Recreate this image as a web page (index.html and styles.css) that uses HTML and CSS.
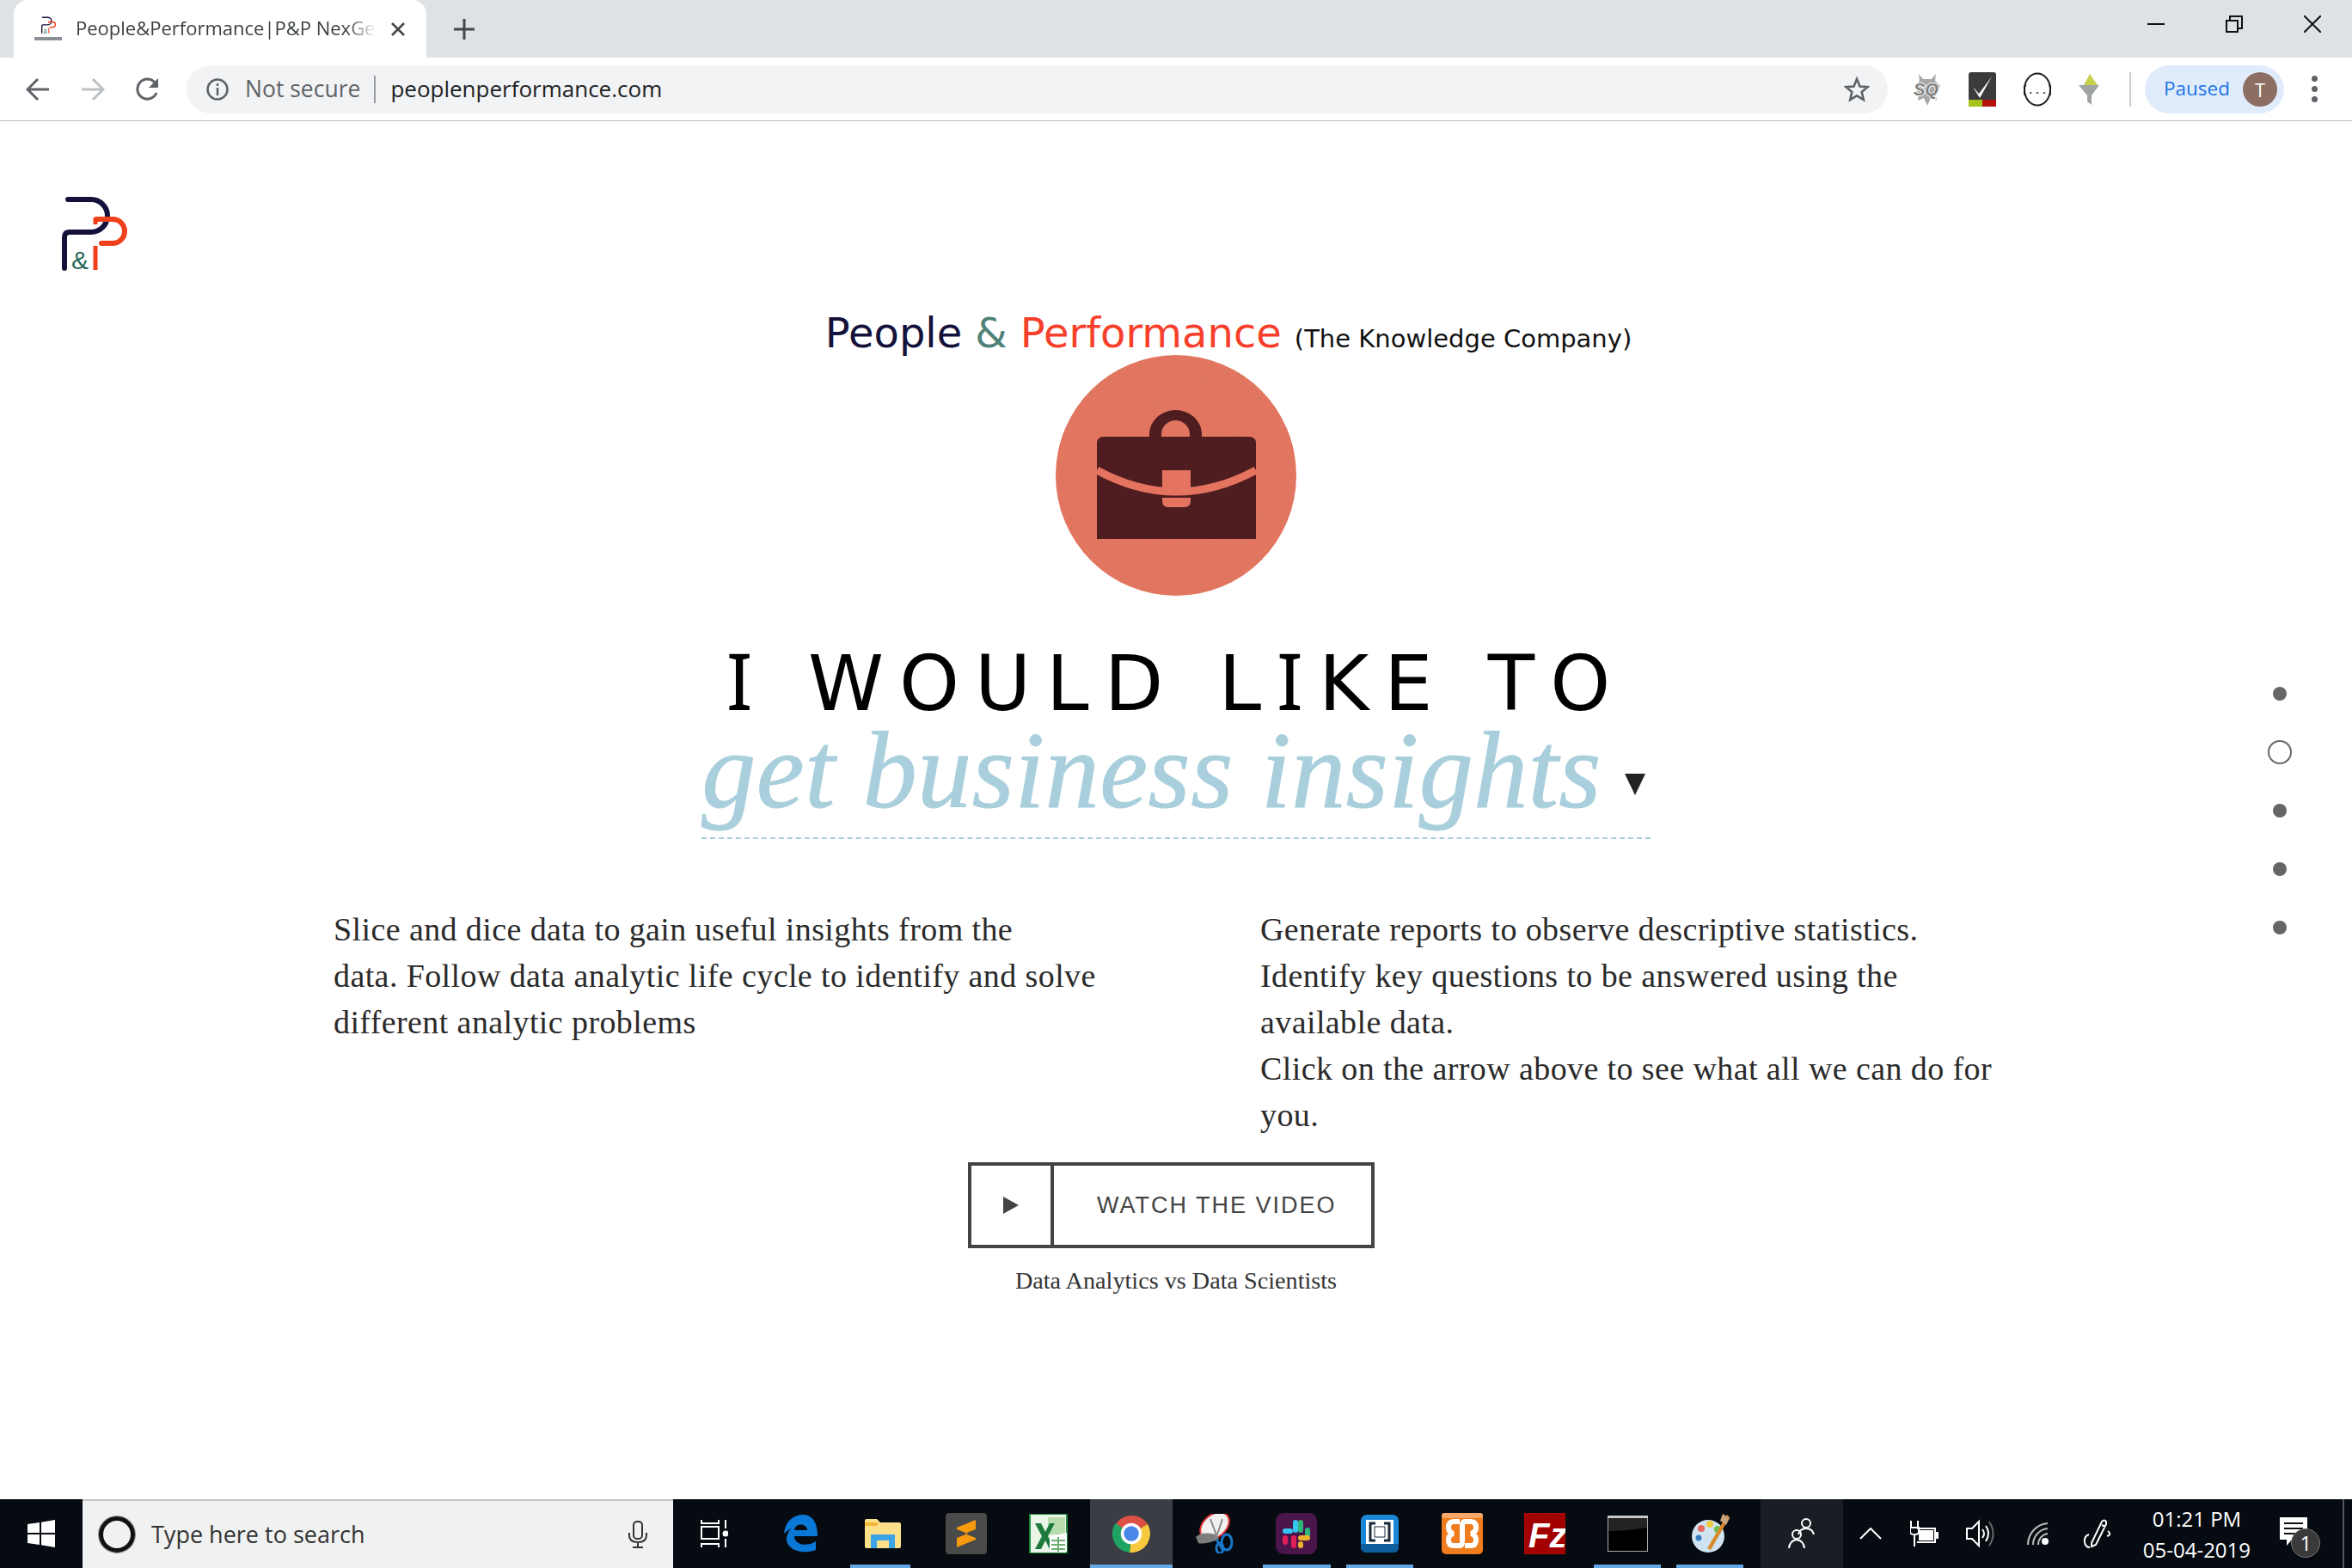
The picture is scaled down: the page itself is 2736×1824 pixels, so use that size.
FILE: index.html
```html
<!DOCTYPE html>
<html lang="en">
<head>
  <meta charset="UTF-8" />
  <title>People&amp;Performance|P&amp;P NexGen</title>
  <link rel="stylesheet" href="styles.css">
</head>
<body>

  <svg class="sprite" width="0" height="0">
    <symbol id="pp-logo" viewBox="0 0 80 90">
      <path d="M7 4H34A19 19 0 0 1 34 42H9Q3 42 3 48V84" fill="none" stroke="#14123a" stroke-width="6" stroke-linecap="round"/>
      <path d="M40 27H59A14 14 0 0 1 59 55H46" fill="none" stroke="#f0401c" stroke-width="6" stroke-linecap="round"/>
      <path d="M39 25V33M39 58V86" fill="none" stroke="#f0401c" stroke-width="5"/>
      <text x="11" y="85" class="logo-amp">&amp;</text>
    </symbol>
    <filter id="felt" x="0" y="0" width="100%" height="100%">
      <feTurbulence type="fractalNoise" baseFrequency="0.35" numOctaves="3" seed="4"/>
      <feColorMatrix values="0 0 0 0 0.45  0 0 0 0 0.2  0 0 0 0 0.15  0.9 0 0 0 -0.38"/>
      <feComposite in2="SourceGraphic" operator="in"/>
    </filter>
  </svg>

  <!-- Browser chrome -->
  <header class="browser">
    <div class="tabstrip">
      <div class="tab">
        <svg class="favicon" width="32" height="30" viewBox="0 0 32 30">
          <use href="#pp-logo" x="8" y="0" width="18" height="21"/>
          <rect x="0" y="24" width="32" height="4" fill="#8a8f96"/>
        </svg>
        <span class="tab-title">People&amp;Performance|P&amp;P NexGen</span>
        <svg width="18" height="18" viewBox="0 0 18 18"><path d="M2 2L16 16M16 2L2 16" stroke="#45474a" stroke-width="2.6"/></svg>
      </div>
      <svg class="new-tab" width="24" height="24" viewBox="0 0 24 24"><path d="M12 0V24M0 12H24" stroke="#45474a" stroke-width="3"/></svg>
      <div class="window-btns">
        <svg width="20" height="20" viewBox="0 0 20 20"><path d="M0 10H20" stroke="#111" stroke-width="2"/></svg>
        <svg width="20" height="20" viewBox="0 0 20 20"><path d="M1 6H14V19H1ZM5 5V1H19V15H15" fill="none" stroke="#111" stroke-width="2"/></svg>
        <svg width="20" height="20" viewBox="0 0 20 20"><path d="M0 0L20 20M20 0L0 20" stroke="#111" stroke-width="2"/></svg>
      </div>
    </div>

    <div class="toolbar">
      <svg class="nav-btn" width="28" height="28" viewBox="0 0 28 28"><path d="M27 14H3M14 2L2 14L14 26" fill="none" stroke="#5f6368" stroke-width="3"/></svg>
      <svg class="nav-btn" width="28" height="28" viewBox="0 0 28 28"><path d="M1 14H25M14 2L26 14L14 26" fill="none" stroke="#bcbfc3" stroke-width="3"/></svg>
      <svg class="nav-btn" width="28" height="28" viewBox="0 0 28 28"><path d="M24 18A11.500 11.500 0 1 1 22 6" fill="none" stroke="#5f6368" stroke-width="3"/><path d="M26 1V12H15Z" fill="#5f6368"/></svg>

      <div class="omnibox">
        <svg width="28" height="28" viewBox="0 0 28 28"><circle cx="14" cy="14" r="11.500" fill="none" stroke="#5f6368" stroke-width="2.500"/><path d="M14 12V21M14 7V10" stroke="#5f6368" stroke-width="2.500"/></svg>
        <span class="not-secure">Not secure</span>
        <span class="omni-sep"></span>
        <span class="url">peoplenperformance.com</span>
        <svg class="star" width="30" height="30" viewBox="0 0 30 30"><path d="M15 3L18.500 11.500L27.500 12.200L20.700 18L22.800 27L15 22.300L7.200 27L9.300 18L2.500 12.200L11.500 11.500Z" fill="none" stroke="#5f6368" stroke-width="2.600"/></svg>
      </div>

      <div class="extensions">
        <svg width="32" height="40" viewBox="0 0 32 40"><path d="M6 2L11 8H21L26 2L25 10L31 16L26 26L27 33L20 30L16 39L12 30L5 33L6 26L1 16L7 10Z" fill="#a8a8a8"/><text x="0" y="27" class="ext-sq">SQ</text></svg>
        <svg width="32" height="40" viewBox="0 0 32 40"><rect width="32" height="40" rx="3" fill="#3b3b3b"/><rect y="32" width="16" height="8" fill="#a4c41a"/><rect x="16" y="32" width="16" height="8" fill="#b4100c"/><path d="M5 17L12 25L27 5L13 30Z" fill="#fff"/></svg>
        <svg width="32" height="40" viewBox="0 0 32 40"><ellipse cx="16" cy="20" rx="15" ry="18.500" fill="#fff" stroke="#222" stroke-width="2"/><text x="16" y="25" class="ext-braces">{...}</text></svg>
        <svg width="24" height="36" viewBox="0 0 24 36"><path d="M6 13L13 0L22 13Z" fill="#c7d04a"/><path d="M0 13H24L15 25V36L10 32V25Z" fill="#a0a4a2"/></svg>
      </div>
      <span class="ext-sep"></span>

      <div class="profile-pill">
        <span class="paused">Paused</span>
        <span class="avatar">T</span>
      </div>
      <div class="menu-dots"><i></i><i></i><i></i></div>
    </div>
  </header>

  <!-- Page -->
  <main class="page">
    <a class="logo" href="#"><svg width="80" height="90"><use href="#pp-logo"/></svg></a>

    <div class="brand">
      <span class="brand-people">People</span>
      <span class="brand-amp">&amp;</span>
      <span class="brand-perf">Performance</span>
      <span class="brand-tag">(The Knowledge Company)</span>
    </div>

    <svg class="goal-icon" width="280" height="280" viewBox="0 0 280 280">
      <circle cx="140" cy="140" r="140" fill="#e6755f"/>
      <circle cx="140" cy="140" r="140" filter="url(#felt)"/>
      <path d="M109 95V92A30.500 28 0 0 1 170 92V95H156V92A16.500 16 0 0 0 123 92V95Z" fill="#4f1c20"/>
      <path d="M48 214V103Q48 95 56 95H225Q233 95 233 103V214Z" fill="#4f1c20"/>
      <path d="M48 134Q140 184 233 134" fill="none" stroke="#e4745f" stroke-width="9"/>
      <path d="M124 134H157V160H124ZM124 166H157V170Q157 177 150 177H131Q124 177 124 170Z" fill="#e4745f"/>
    </svg>

    <h1 class="headline"><span class="cap-i">I</span> WOULD L<span class="cap-i">I</span>KE TO</h1>
    <div class="goal-picker">
      <span class="goal-text">get business insights</span>
      <svg class="goal-arrow" width="24" height="25" viewBox="0 0 24 25"><path d="M0 0H24L12 25Z" fill="#222"/></svg>
    </div>

    <div class="columns">
      <p>Slice and dice data to gain useful insights from the<br>data. Follow data analytic life cycle to identify and solve<br>different analytic problems</p>
      <p>Generate reports to observe descriptive statistics.<br>Identify key questions to be answered using the<br>available data.<br>Click on the arrow above to see what all we can do for<br>you.</p>
    </div>

    <a class="watch" href="#">
      <span class="watch-play"><svg width="18" height="20" viewBox="0 0 18 20"><path d="M0 0L18 10L0 20Z" fill="#444"/></svg></span>
      <span class="watch-label">WATCH THE VIDEO</span>
    </a>
    <p class="caption">Data Analytics vs Data Scientists</p>

    <nav class="side-dots">
      <i></i><i class="current"></i><i></i><i></i><i></i>
    </nav>
  </main>

  <!-- Windows taskbar -->
  <footer class="taskbar">
    <div class="start">
      <svg width="32" height="32" viewBox="0 0 32 32"><path d="M0 5L14 3V15H0ZM16 2.700L32 0V15H16ZM0 17H14V29L0 27ZM16 17H32V32L16 29.300Z" fill="#fff"/></svg>
    </div>
    <div class="search">
      <span class="cortana"></span>
      <span class="search-text">Type here to search</span>
      <svg class="mic" width="22" height="32" viewBox="0 0 22 32"><rect x="6" y="1" width="10" height="20" rx="4" fill="none" stroke="#333" stroke-width="2"/><path d="M1 14V17Q1 25 11 25Q21 25 21 17V14M11 25V31M5 31H17" fill="none" stroke="#333" stroke-width="2"/></svg>
    </div>

    <div class="task-items">
      <div class="task-item task-view">
        <svg width="32" height="32" viewBox="0 0 32 32"><path d="M1 0V4H21V0M1 8H21V22H1ZM1 32V28H21V32M29 0V10M29 22V32" fill="none" stroke="#fff" stroke-width="2"/><circle cx="29" cy="16" r="3.500" fill="#fff"/></svg>
      </div>
      <div class="task-item">
        <svg width="40" height="44" viewBox="0 0 40 44"><path d="M1 22C2 8 12 0 23 0C34 0 40 9 40 25H13C13 35 27 38 38 31V41C22 47 3 41 4 27C5 21 8 17 10 15C8 17 4 19 1 22ZM13 18H28C28 10 14 9 13 18Z" fill="#0a78d7"/></svg>
      </div>
      <div class="task-item running split">
        <svg width="42" height="34" viewBox="0 0 42 34"><path d="M0 2Q0 0 2 0H14L18 4H40Q42 4 42 6V32Q42 34 40 34H2Q0 34 0 32Z" fill="#fde08a"/><path d="M0 4H16L14 8H0Z" fill="#f2b632"/><path d="M7 18H35V34H28V25H14V34H7Z" fill="#3ba4e6"/></svg>
      </div>
      <div class="task-item">
        <svg width="48" height="48" viewBox="0 0 48 48"><rect width="48" height="48" rx="4" fill="#4a4a4a"/><path d="M35 8V19L22 24L35 29V31L13 40V29L26 24L13 19V17Z" fill="#f89a0e"/></svg>
      </div>
      <div class="task-item">
        <svg width="45" height="46" viewBox="0 0 45 46"><path d="M1 0H44V46H1Z" fill="#e9f4e6" stroke="#1f8a3b" stroke-width="2"/><path d="M22 4H42V24H22Z" fill="#b9dcae"/><path d="M7 11H14L19 21L24 11H30L22 26L30 41H24L19 31L14 41H7L15 26Z" fill="#1d7a3c"/><path d="M24 27L44 22V44H24Z" fill="#fff"/><path d="M26 31H42M26 36H42M26 41H42M34 27V44" stroke="#6cb072" stroke-width="2"/></svg>
      </div>
      <div class="task-item running active">
        <svg width="44" height="44" viewBox="0 0 44 44">
          <path d="M22 22L3.500 12A22 22 0 0 1 41 11Z" fill="#dd5144"/>
          <path d="M22 22L41 11A22 22 0 0 1 20 44Z" fill="#f7c93e"/>
          <path d="M22 22L20 44A22 22 0 0 1 3.500 10Z" fill="#1ea362"/>
          <circle cx="22" cy="22" r="10.500" fill="#4a86e8" stroke="#fff" stroke-width="3.500"/>
        </svg>
      </div>
      <div class="task-item">
        <svg width="45" height="46" viewBox="0 0 45 46"><ellipse cx="23" cy="14" rx="19" ry="13" transform="rotate(-40 23 14)" fill="#f1f1f1" stroke="#d33" stroke-width="2"/><path d="M1 27Q8 20 24 24L24 31Q10 36 4 34Z" fill="#7d7d7d"/><path d="M18 6L27 30M32 6L24 30" stroke="#888" stroke-width="2"/><path d="M25 30L33 43" stroke="#1976c8" stroke-width="3"/><ellipse cx="37" cy="33" rx="6" ry="9" fill="none" stroke="#1976c8" stroke-width="3"/><ellipse cx="29" cy="40" rx="4" ry="6" fill="none" stroke="#1976c8" stroke-width="3"/></svg>
      </div>
      <div class="task-item running">
        <svg width="48" height="48" viewBox="0 0 48 48"><rect width="48" height="48" rx="9" fill="#4a154b"/><rect x="20" y="8" width="6" height="15" rx="3" fill="#36c5f0"/><rect x="8" y="18" width="12" height="6" rx="3" fill="#36c5f0"/><rect x="34" y="17" width="6" height="11" rx="3" fill="#2eb67d"/><rect x="26" y="8" width="6" height="15" rx="3" fill="#2eb67d"/><rect x="8" y="26" width="6" height="11" rx="3" fill="#e01e5a"/><rect x="18" y="26" width="6" height="15" rx="3" fill="#e01e5a"/><rect x="26" y="26" width="14" height="6" rx="3" fill="#ecb22e"/><rect x="26" y="33" width="6" height="8" rx="3" fill="#ecb22e"/></svg>
      </div>
      <div class="task-item running">
        <svg width="44" height="44" viewBox="0 0 44 44"><rect width="44" height="44" rx="7" fill="#1a87d6"/><path d="M0 34H44V38Q44 44 37 44H7Q0 44 0 38Z" fill="#0d5f9c"/><rect x="6" y="6" width="32" height="28" fill="#fff"/><path d="M17 10H11V30H17M27 10H33V30H27" fill="none" stroke="#1a2a3a" stroke-width="3"/><rect x="16" y="14" width="12" height="12" fill="#fff" stroke="#1a2a3a" stroke-width="1"/></svg>
      </div>
      <div class="task-item">
        <svg width="48" height="48" viewBox="0 0 48 48"><rect width="48" height="48" rx="5" fill="#f07c1e"/><rect width="48" height="6" rx="3" fill="#f8a868"/><path d="M21 10H14Q8 10 8 17Q8 23 14 24Q8 25 8 31Q8 38 14 38H21Q24 38 24 33V15Q24 10 27 10H34Q40 10 40 17Q40 23 34 24Q40 25 40 31Q40 38 34 38H27" fill="none" stroke="#fff" stroke-width="6"/></svg>
      </div>
      <div class="task-item">
        <svg width="48" height="48" viewBox="0 0 48 48"><rect width="48" height="48" fill="#a30000" stroke="#c22" stroke-dasharray="2 2"/><text x="5" y="40" class="fz-mark">Fz</text></svg>
      </div>
      <div class="task-item running">
        <svg width="47" height="42" viewBox="0 0 47 42"><rect width="47" height="42" fill="#000" stroke="#aaa" stroke-width="2"/><rect width="47" height="3" fill="#c8c8c8"/><path d="M1 18Q22 18 46 14V3H1Z" fill="#232323"/></svg>
      </div>
      <div class="task-item running">
        <svg width="46" height="46" viewBox="0 0 46 46"><ellipse cx="21" cy="26" rx="19" ry="19" fill="#cfe3f1"/><circle cx="13" cy="17" r="4" fill="#e96a5d"/><circle cx="23" cy="12" r="4" fill="#f0c93b"/><circle cx="32" cy="18" r="4" fill="#6abf4b"/><circle cx="10" cy="28" r="3.500" fill="#3a7cc2"/><path d="M43 1L46 4L24 42L20 40Z" fill="#d98a2c"/><path d="M38 0L46 5L42 13L35 8Z" fill="#c9a27a"/></svg>
      </div>
    </div>

    <div class="tray">
      <div class="people-btn">
        <svg width="32" height="38" viewBox="0 0 32 38"><g fill="none" stroke="#fff" stroke-width="2"><circle cx="21" cy="7" r="5"/><path d="M12 20Q14 13 21 13Q28 13 30 20"/><circle cx="10" cy="20" r="5"/><path d="M1 36Q2 27 10 26Q18 27 19 36"/></g></svg>
      </div>
      <svg class="tray-chevron" width="26" height="14" viewBox="0 0 26 14"><path d="M1 13L13 1L25 13" fill="none" stroke="#fff" stroke-width="2"/></svg>
      <svg class="tray-power" width="33" height="30" viewBox="0 0 33 30"><path d="M1 0V8M9 0V8M0 8H10V13Q10 16 5 16Q0 16 0 13ZM5 16V30" fill="none" stroke="#fff" stroke-width="2"/><path d="M8 9H29V25H8" fill="none" stroke="#fff" stroke-width="2"/><rect x="10" y="11" width="17" height="12" fill="#fff"/><rect x="30" y="13" width="3" height="8" fill="#fff"/></svg>
      <svg class="tray-sound" width="33" height="34" viewBox="0 0 33 34"><path d="M1 11H7L15 3V31L7 23H1Z" fill="none" stroke="#fff" stroke-width="2"/><path d="M19 12Q23 17 19 22M23 8Q29 17 23 26" fill="none" stroke="#fff" stroke-width="2"/><path d="M27 3Q36 17 27 31" fill="none" stroke="#666" stroke-width="2"/></svg>
      <svg class="tray-wifi" width="27" height="26" viewBox="0 0 27 26"><path d="M1 26A25 25 0 0 1 24 1M7 26A19 19 0 0 1 24 7M13 26A13 13 0 0 1 24 13" fill="none" stroke="#bbb" stroke-width="2"/><circle cx="21" cy="22" r="4" fill="#fff"/></svg>
      <svg class="tray-pen" width="34" height="34" viewBox="0 0 34 34"><path d="M10 28L22 3Q25 0 27 3L27 6L15 30L10 32ZM22 7L26 9" fill="none" stroke="#fff" stroke-width="2"/><path d="M29 14Q34 18 28 20M7 18Q1 20 2 27Q3 33 8 33" fill="none" stroke="#fff" stroke-width="2"/></svg>
      <div class="clock">
        <span>01:21 PM</span>
        <span>05-04-2019</span>
      </div>
      <div class="notify">
        <svg width="32" height="38" viewBox="0 0 32 38"><path d="M0 0H32V26H14L8 33V26H0Z" fill="#fff"/><path d="M5 7H27M5 13H27M5 19H27" stroke="#111" stroke-width="2"/></svg>
        <span class="notify-badge">1</span>
      </div>
      <span class="desktop-edge"></span>
    </div>
  </footer>

</body>
</html>
```

FILE: styles.css
```css
html, body {
  height: 100%;
}

body {
  margin: 0;
  height: 1824px;
  display: flex;
  flex-direction: column;
  overflow: hidden;
  background-color: #fff;
  font-family: "Open Sans", sans-serif;
}

.sprite {
  position: absolute;
}

.logo-amp {
  font-family: "Liberation Sans", sans-serif;
  font-size: 30px;
  fill: #2a6a5a;
}

/* Browser chrome */
.browser {
  flex: none;
}

.tabstrip {
  height: 67px;
  display: flex;
  align-items: center;
  background-color: #dee1e6;
}

.tab {
  width: 480px;
  height: 67px;
  margin-left: 16px;
  padding: 0 24px;
  box-sizing: border-box;
  display: flex;
  align-items: center;
  background-color: #fff;
  border-radius: 16px 16px 0 0;
}

.favicon {
  flex: none;
  margin-right: 16px;
}

.tab-title {
  flex: 1;
  width: 0;
  margin-right: 16px;
  margin-top: -3px;
  overflow: hidden;
  white-space: nowrap;
  font-size: 22px;
  color: #3c4043;
  -webkit-mask-image: linear-gradient(to right, #000 90%, transparent);
  mask-image: linear-gradient(to right, #000 90%, transparent);
}

.new-tab {
  margin-left: 32px;
}

.window-btns {
  margin-left: auto;
  padding-right: 36px;
  margin-top: -11px;
  display: flex;
  gap: 71px;
}

.toolbar {
  height: 73px;
  display: flex;
  align-items: center;
  padding-left: 30px;
  padding-right: 40px;
  border-bottom: 1px solid #b9babc;
}

.nav-btn {
  margin-right: 36px;
  flex: none;
}

.omnibox {
  flex: 1;
  height: 56px;
  margin-left: -5px;
  padding: 0 21px 0 22px;
  display: flex;
  align-items: center;
  background-color: #f1f3f4;
  border-radius: 28px;
}

.not-secure {
  margin-left: 18px;
  margin-top: -2px;
  font-size: 26.5px;
  color: #5f6368;
}

.omni-sep {
  width: 2px;
  height: 32px;
  margin: 0 17px 0 16px;
  background-color: #9a9da0;
}

.url {
  margin-top: -2px;
  font-size: 26px;
  color: #202124;
}

.star {
  margin-left: auto;
}

.extensions {
  width: 218px;
  margin-left: 30px;
  display: flex;
  align-items: center;
  gap: 32px;
}

.ext-sq {
  font-family: "Liberation Sans", sans-serif;
  font-weight: bold;
  font-style: italic;
  font-size: 20px;
  fill: #808080;
  stroke: #fff;
  stroke-width: 2px;
  paint-order: stroke;
}

.ext-braces {
  font-family: "DejaVu Sans Mono", monospace;
  font-size: 13px;
  text-anchor: middle;
  fill: #111;
}

.ext-sep {
  width: 2px;
  height: 40px;
  margin-left: 33px;
  background-color: #c9cbce;
}

.profile-pill {
  width: 162px;
  height: 56px;
  margin-left: 16px;
  padding: 0 8px 0 22px;
  box-sizing: border-box;
  display: flex;
  align-items: center;
  justify-content: space-between;
  background-color: #e0ecfb;
  border-radius: 28px;
}

.paused {
  margin-top: -2px;
  font-size: 22.5px;
  color: #1a73e8;
}

.avatar {
  width: 40px;
  height: 40px;
  border-radius: 50%;
  background-color: #8d6e63;
  color: #fff;
  font-size: 22px;
  line-height: 40px;
  text-align: center;
}

.menu-dots {
  margin-left: 32px;
  display: flex;
  flex-direction: column;
  gap: 5px;
}

.menu-dots i {
  width: 7px;
  height: 7px;
  border-radius: 50%;
  background-color: #5f6368;
}

/* Page */
.page {
  flex: 1;
  position: relative;
  padding-top: 87px;
  display: flex;
  flex-direction: column;
  align-items: center;
  font-family: "Liberation Serif", serif;
}

.logo {
  align-self: flex-start;
  height: 87px;
  margin-left: 72px;
}

.brand {
  height: 55px;
  margin-top: 43px;
  padding-left: 122px;
  display: flex;
  align-items: baseline;
  gap: 15px;
  font-family: "DejaVu Sans", sans-serif;
  font-size: 48px;
  line-height: 58px;
}

.brand-people { color: #14123a; }
.brand-amp { color: #4f8278; }
.brand-perf { color: #f7402c; }

.brand-tag {
  font-size: 29px;
  color: #111;
}

.goal-icon {
  flex: none;
}

.headline {
  margin: 59px 0 0;
  font-family: "DejaVu Sans", sans-serif;
  font-weight: normal;
  font-size: 89px;
  line-height: 87px;
  letter-spacing: 18px;
  color: #000;
}

.cap-i {
  font-family: "Noto Sans", sans-serif;
  font-size: 91px;
  line-height: 0;
}

.goal-picker {
  display: inline-flex;
  align-items: center;
  gap: 27px;
  padding-bottom: 19px;
  border-bottom: 2px dashed #a9cfdc;
}

.goal-text {
  font-size: 126px;
  line-height: 116px;
  font-style: italic;
  letter-spacing: 0.5px;
  color: #a9cfdc;
  -webkit-text-stroke: 1px #a9cfdc;
}

.goal-arrow {
  margin-right: 6px;
  margin-top: 30px;
}

.columns {
  align-self: stretch;
  margin-top: 78px;
  padding-left: 388px;
  display: grid;
  grid-template-columns: 1078px 1fr;
}

.columns p {
  margin: 0;
  font-size: 38px;
  line-height: 54px;
  letter-spacing: 0.4px;
  color: #2a2a2a;
}

.watch {
  width: 473px;
  height: 100px;
  margin-top: 28px;
  margin-right: 11px;
  box-sizing: border-box;
  display: flex;
  border: 4px solid #444;
  text-decoration: none;
  color: #444;
}

.watch-play {
  width: 92px;
  display: flex;
  align-items: center;
  justify-content: center;
  border-right: 4px solid #444;
}

.watch-label {
  padding-left: 50px;
  align-self: center;
  font-family: "Liberation Sans", sans-serif;
  font-size: 27px;
  letter-spacing: 2px;
}

.caption {
  margin: 18px 0 0;
  font-size: 28.2px;
  line-height: 40px;
  color: #333;
}

.side-dots {
  position: absolute;
  top: 0;
  right: 84px;
  width: 0;
  height: 0;
}

.side-dots i {
  position: absolute;
  left: 0;
  width: 16px;
  height: 16px;
  transform: translate(-8px, -8px);
  border-radius: 50%;
  background-color: #666;
}

.side-dots i:nth-child(1) { top: 666px; }
.side-dots i:nth-child(2) { top: 734px; }
.side-dots i:nth-child(3) { top: 802px; }
.side-dots i:nth-child(4) { top: 870px; }
.side-dots i:nth-child(5) { top: 938px; }

.side-dots i.current {
  width: 28px;
  height: 28px;
  box-sizing: border-box;
  transform: translate(-14px, -14px);
  background-color: transparent;
  border: 2px solid #666;
}

/* Taskbar */
.taskbar {
  flex: none;
  height: 80px;
  display: flex;
  background-color: #060b12;
}

.start {
  width: 96px;
  display: flex;
  align-items: center;
  justify-content: center;
}

.search {
  width: 687px;
  box-sizing: border-box;
  padding: 0 30px 0 19px;
  display: flex;
  align-items: center;
  background-color: #f0f1f1;
  border-top: 2px solid #c2c2c2;
}

.cortana {
  width: 42px;
  height: 42px;
  box-sizing: border-box;
  border-radius: 50%;
  border: 5px solid #111;
  box-shadow: 0 0 0 1px #888;
}

.search-text {
  margin-left: 19px;
  margin-top: -2px;
  font-size: 27px;
  color: #333;
}

.mic {
  margin-left: auto;
}

.task-items {
  margin-left: 4px;
  display: flex;
}

.task-item {
  position: relative;
  width: 96.2px;
  display: flex;
  align-items: center;
  justify-content: center;
}

.task-view svg {
  margin-right: 8px;
}

.task-item.running::after {
  content: "";
  position: absolute;
  left: 9px;
  right: 9px;
  bottom: 0;
  height: 4px;
  background-color: #63a8e6;
}

.task-item.active {
  background-color: #3a3e44;
}

.task-item.active::after {
  left: 0;
  right: 0;
}

.task-item.split::after {
  left: 10px;
  right: 17px;
}

.tray {
  flex: 1;
  display: flex;
  align-items: center;
  margin-left: 11px;
  color: #fff;
}

.people-btn {
  width: 96px;
  height: 80px;
  display: flex;
  align-items: center;
  justify-content: center;
  background-color: #1a1e24;
}

.tray-chevron { margin-left: 19px; }
.tray-power { margin-left: 33px; }
.tray-sound { margin-left: 32px; }
.tray-wifi { margin-left: 38px; }
.tray-pen { margin-left: 38px; }

.clock {
  width: 130px;
  margin-left: 33px;
  display: flex;
  flex-direction: column;
  align-items: center;
  gap: 7px;
  font-size: 24px;
  line-height: 29px;
}

.notify {
  position: relative;
  margin-left: 32px;
  height: 38px;
}

.notify-badge {
  position: absolute;
  left: 13px;
  top: 13px;
  width: 32px;
  height: 32px;
  border-radius: 50%;
  background-color: #3a3a3a;
  border: 1px solid #777;
  font-size: 24px;
  line-height: 32px;
  text-align: center;
}

.desktop-edge {
  width: 2px;
  height: 80px;
  margin-left: 41px;
  background-color: #555;
}

.fz-mark {
  font-family: "Liberation Sans", sans-serif;
  font-weight: bold;
  font-style: italic;
  font-size: 40px;
  fill: #fff;
}
```
